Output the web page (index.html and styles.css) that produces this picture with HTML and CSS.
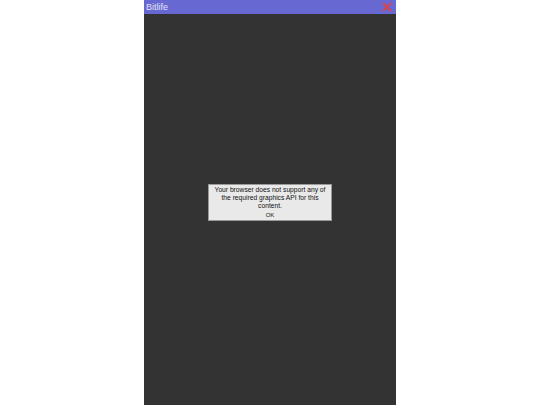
FILE: index.html
```html
<!DOCTYPE html>
<html lang="en">
  <head>
    <meta charset="UTF-8" />
    <meta name="viewport" content="width=device-width, initial-scale=1.0" />
    <title>Bitlife</title>
    <link rel="stylesheet" href="styles.css">
  </head>
  <body>
    <div class="game">
      <div class="titlebar">
        <span class="title">Bitlife</span>
        <svg class="close" width="10" height="10" viewBox="0 0 10 10">
          <path d="M1 1 L9 9 M9 1 L1 9" stroke="#d8434a" stroke-width="2" />
        </svg>
      </div>
      <div class="stage"></div>

      <!-- fallback when no graphics API is available -->
      <div class="alert">
        <p>Your browser does not support any of the required graphics API for this content.</p>
        <div class="ok">OK</div>
      </div>
    </div>
  </body>
</html>
```

FILE: styles.css
```css
body {
  font-family: "Liberation Sans", Arial, sans-serif;
  margin: 0;
  padding: 0;
  background-color: #ffffff;
  display: flex;
  justify-content: center;
  height: 100vh;
}
.game {
  position: relative;
  width: 252px;
  height: 100%;
  display: flex;
  flex-direction: column;
  background-color: #333333;
}
.titlebar {
  height: 14px;
  background-color: #6868d2;
  display: flex;
  align-items: center;
  justify-content: space-between;
  padding: 0 4px 0 2px;
}
.title {
  color: #e4e4f4;
  font-size: 9px;
}
.close {
  display: block;
}
.stage {
  flex: 1;
}
.alert {
  position: absolute;
  top: 184px;
  left: 64px;
  width: 122px;
  height: 35px;
  background-color: #e9e9e9;
  border: 1px solid #9a9a9a;
  text-align: center;
  color: #111111;
}
.alert p {
  margin: 1px 3px 0;
  font-size: 6.7px;
  line-height: 8px;
}
.ok {
  margin-top: 1px;
  font-size: 6px;
  line-height: 8px;
  color: #111111;
}
```
